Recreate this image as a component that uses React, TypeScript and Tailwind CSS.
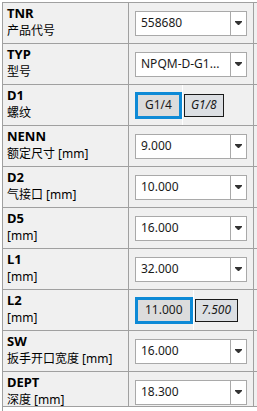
import React from "react";

type Row = {
  code: string;
  label: string;
  value?: string;
  options?: string[];
};

const rows: Row[] = [
  { code: "TNR", label: "产品代号", value: "558680" },
  { code: "TYP", label: "型号", value: "NPQM-D-G1..." },
  { code: "D1", label: "螺纹", options: ["G1/4", "G1/8"] },
  { code: "NENN", label: "额定尺寸 [mm]", value: "9.000" },
  { code: "D2", label: "气接口 [mm]", value: "10.000" },
  { code: "D5", label: "[mm]", value: "16.000" },
  { code: "L1", label: "[mm]", value: "32.000" },
  { code: "L2", label: "[mm]", options: ["11.000", "7.500"] },
  { code: "SW", label: "扳手开口宽度 [mm]", value: "16.000" },
  { code: "DEPT", label: "深度 [mm]", value: "18.300" },
];

const ArrowDown = () => (
  <svg width="7" height="4" viewBox="0 0 7 4" className="block">
    <path d="M0 0H7V1L4 4H3L0 1Z" fill="#333" />
  </svg>
);

const Combo = ({ value }: { value: string }) => (
  <div className="flex h-[25px] w-[112px] border border-[#a9a9a9] bg-white">
    <div className="flex flex-1 items-center pl-[5px] text-[12px] text-[#1a1a1a] whitespace-nowrap overflow-hidden">
      {value}
    </div>
    <div className="flex w-[16px] items-center justify-center border-l border-[#a9a9a9]">
      <ArrowDown />
    </div>
  </div>
);

const Choice = ({ options }: { options: string[] }) => (
  <div className="flex h-full items-center">
    <div className="flex h-[27px] items-center border-[3px] border-[#0e8ad6] bg-[#dcdcdc] px-[7px] text-[12px] text-[#1a1a1a]">
      {options[0]}
    </div>
    <div className="h-full w-px bg-white"></div>
    <div className="ml-[1px] flex h-[23px] items-center border border-[#1a1a1a] bg-[#dcdfe3] px-[6px] text-[12px] italic text-[#1a1a1a]">
      {options[1]}
    </div>
  </div>
);

export default function App() {
  return (
    <div
      className="h-[411px] w-[257px] overflow-hidden bg-white pl-[2px] pt-[2px]"
      style={{ fontFamily: '"Noto Sans", "Noto Sans CJK SC", sans-serif' }}
    >
      <div className="h-full border-l border-[#a0a0a0]">
        <div className="h-[405px] overflow-hidden border-y border-[#a0a0a0]">
          {rows.map((row, i) => (
            <div
              key={row.code}
              className={
                i > 0
                  ? "flex h-[41px] shrink-0 border-t border-[#a0a0a0] bg-[#f0f0f0]"
                  : "flex h-[40px] shrink-0 bg-[#f0f0f0]"
              }
            >
              <div className="w-[126px] shrink-0 border-r border-[#a0a0a0] pl-[4px] pt-[2px] text-black">
                <div className="text-[13px] font-bold leading-[16px]">{row.code}</div>
                <div className="mt-[2px] whitespace-nowrap text-[12px] leading-[16px]">
                  {row.label}
                </div>
              </div>
              <div className="flex w-[125px] shrink-0 items-center border-r border-[#a0a0a0] pl-[6px]">
                {row.options ? (
                  <Choice options={row.options} />
                ) : (
                  <Combo value={row.value ?? ""} />
                )}
              </div>
              <div className="flex-1"></div>
            </div>
          ))}
        </div>
      </div>
    </div>
  );
}
